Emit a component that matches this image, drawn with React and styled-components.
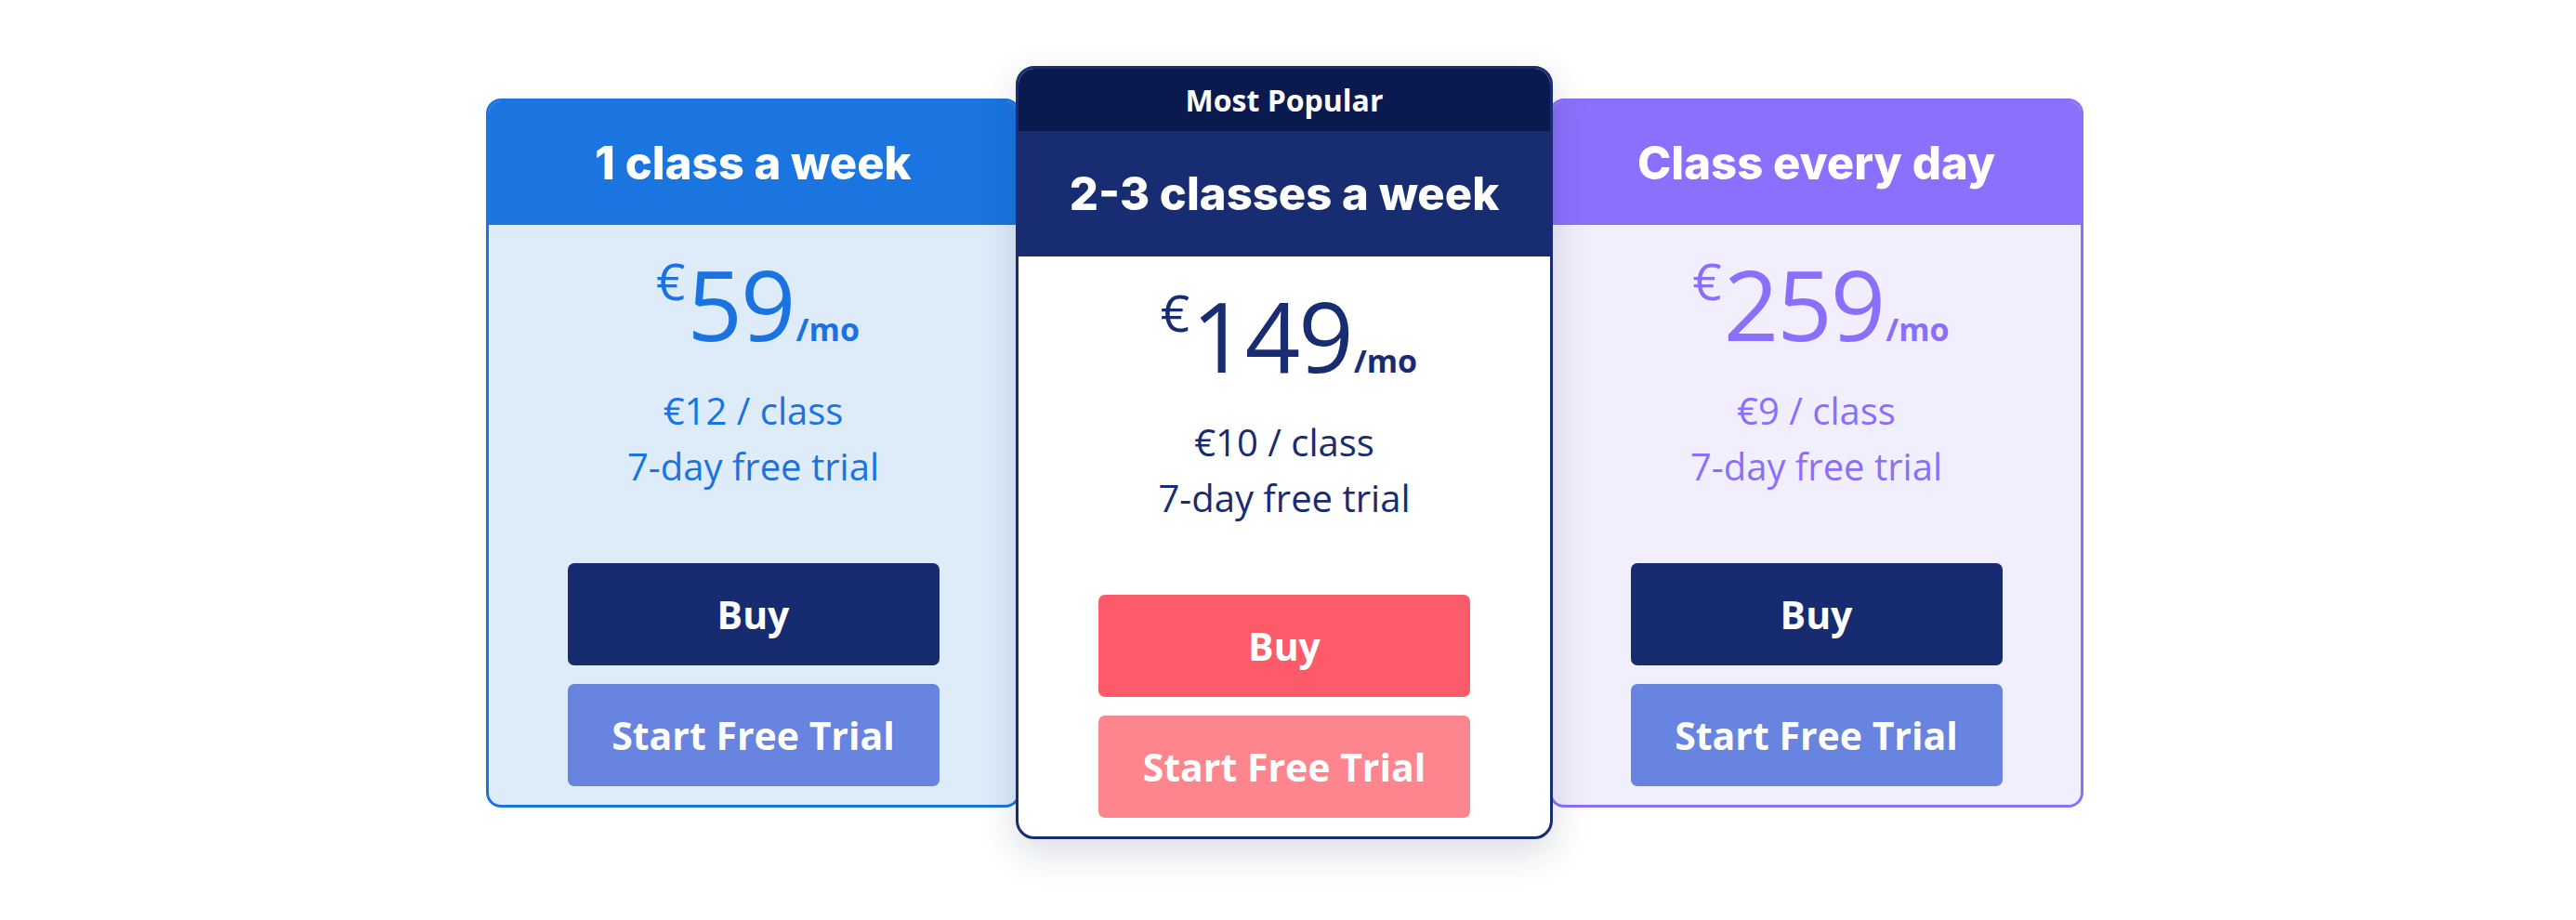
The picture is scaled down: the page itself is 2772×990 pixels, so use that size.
import React from "react";
import styled, { createGlobalStyle } from "styled-components";

const GlobalStyle = createGlobalStyle`
  html, body {
    margin: 0;
    padding: 0;
    background: #ffffff;
  }
  body {
    font-family: "Open Sans", "Liberation Sans", sans-serif;
  }
`;

const plans = [
  {
    title: "1 class a week",
    price: "59",
    perClass: "€12 / class",
    theme: {
      accent: "#1a75e0",
      body: "#deebf9",
      text: "#1a73e0",
      buy: "#172b70",
      trial: "#6784e0",
    },
  },
  {
    title: "2-3 classes a week",
    price: "149",
    perClass: "€10 / class",
    popular: true,
    theme: {
      accent: "#182c71",
      body: "#ffffff",
      text: "#182c71",
      buy: "#fd5b69",
      trial: "#fd868e",
    },
  },
  {
    title: "Class every day",
    price: "259",
    perClass: "€9 / class",
    theme: {
      accent: "#8b70fd",
      body: "#f1effd",
      text: "#8b6ffb",
      buy: "#172b70",
      trial: "#6784e0",
    },
  },
];

const Page = styled.div`
  width: 100%;
  height: 990px;
  box-sizing: border-box;
  padding-top: 71px;
  padding-right: 7px;
  display: flex;
  justify-content: center;
  align-items: flex-start;
`;

const Row = styled.div`
  display: flex;
  align-items: center;
`;

const Card = styled.div`
  position: relative;
  z-index: ${(p) => (p.$popular ? 2 : 1)};
  width: ${(p) => (p.$popular ? "578px" : "575px")};
  margin: ${(p) => (p.$popular ? "0 -4px 0 -5px" : "0")};
  box-sizing: border-box;
  border: 3px solid ${(p) => p.$accent};
  border-radius: ${(p) => (p.$popular ? "20px" : "16px")};
  background: ${(p) => p.$body};
  overflow: hidden;
  display: flex;
  flex-direction: column;
  box-shadow: ${(p) =>
    p.$popular ? "0 14px 40px rgba(20, 30, 60, 0.16)" : "none"};
`;

const Ribbon = styled.div`
  height: 67px;
  background: #0b1a4e;
  color: #ffffff;
  display: flex;
  align-items: center;
  justify-content: center;
  font-family: "Open Sans", sans-serif;
  font-weight: 700;
  font-size: 32px;
`;

const Header = styled.div`
  height: ${(p) => (p.$popular ? "135px" : "133px")};
  background: ${(p) => p.$accent};
  color: #ffffff;
  display: flex;
  align-items: center;
  justify-content: center;
  font-family: "Inter", "Liberation Sans", sans-serif;
  font-weight: 800;
  font-size: 49px;
`;

const Body = styled.div`
  height: 624px;
  box-sizing: border-box;
  padding: 33px 0 20px;
  display: flex;
  flex-direction: column;
  align-items: center;
  color: ${(p) => p.$text};
`;

const Price = styled.div`
  display: flex;
  align-items: baseline;
  justify-content: center;
  height: 104px;
  line-height: 1;
  padding-left: 10px;
`;

const Currency = styled.span`
  align-self: flex-start;
  font-size: 55px;
  line-height: 1;
  margin-top: -1px;
  margin-right: 2px;
`;

const Amount = styled.span`
  font-size: 104px;
  font-weight: 400;
  letter-spacing: -2px;
`;

const Period = styled.span`
  font-size: 34px;
  font-weight: 700;
  margin-left: 2px;
`;

const Features = styled.div`
  margin-top: 33px;
  font-size: 40px;
  line-height: 60px;
  text-align: center;
`;

const Actions = styled.div`
  margin-top: 74px;
  display: flex;
  flex-direction: column;
  gap: 20px;
`;

const Button = styled.button`
  width: 400px;
  height: 110px;
  border: none;
  border-radius: 7px;
  background: ${(p) => p.$bg};
  color: #ffffff;
  font-family: "Open Sans", sans-serif;
  font-weight: 700;
  font-size: 41px;
  cursor: pointer;
  padding: 0;
`;

function PlanCard({ plan }) {
  const { theme } = plan;
  return (
    <Card
      $popular={plan.popular}
      $accent={theme.accent}
      $body={theme.body}
    >
      {plan.popular && <Ribbon>Most Popular</Ribbon>}
      <Header $accent={theme.accent} $popular={plan.popular}>
        {plan.title}
      </Header>
      <Body $text={theme.text}>
        <Price>
          <Currency>€</Currency>
          <Amount>{plan.price}</Amount>
          <Period>/mo</Period>
        </Price>
        <Features>
          <div>{plan.perClass}</div>
          <div>7-day free trial</div>
        </Features>
        <Actions>
          <Button $bg={theme.buy}>Buy</Button>
          <Button $bg={theme.trial}>Start Free Trial</Button>
        </Actions>
      </Body>
    </Card>
  );
}

export default function App() {
  return (
    <>
      <GlobalStyle />
      <Page>
        <Row>
          {plans.map((plan) => (
            <PlanCard key={plan.title} plan={plan} />
          ))}
        </Row>
      </Page>
    </>
  );
}
